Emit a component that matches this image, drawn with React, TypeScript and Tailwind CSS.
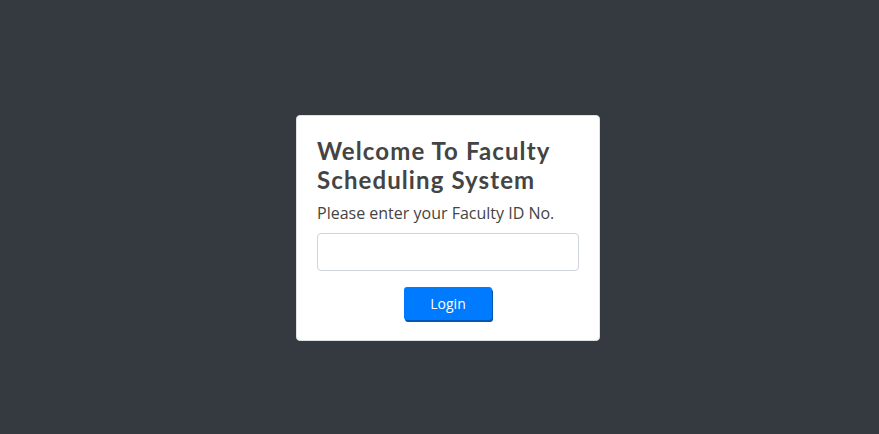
export default function App() {
  return (
    <div className="flex h-[434px] w-full items-center justify-center bg-[#343a40] pl-[17px] pt-[21px]">
      <div className="w-[304px] rounded border border-[#dee2e6] bg-white p-5">
        <h1 className="text-[24px] font-bold leading-[29px] text-[#444444] [font-family:Lato,'Open_Sans',sans-serif] tracking-[1.1px]">
          Welcome To Faculty Scheduling System
        </h1>
        <p className="mt-[7px] text-[16px] leading-6 text-[#444444] [font-family:'Open_Sans',sans-serif]">
          Please enter your Faculty ID No.
        </p>
        <input
          type="text"
          className="mt-[8px] block h-[38px] w-full rounded border border-[#ced4da] bg-white px-3 outline-none"
        />
        <div className="mt-4 flex justify-center">
          <button
            type="button"
            className="h-[33px] w-[88px] rounded-[3px] bg-[#007bff] text-[14px] text-white shadow-[1px_2px_0_#0056b3] [font-family:'Open_Sans',sans-serif]"
          >
            Login
          </button>
        </div>
      </div>
    </div>
  );
}
